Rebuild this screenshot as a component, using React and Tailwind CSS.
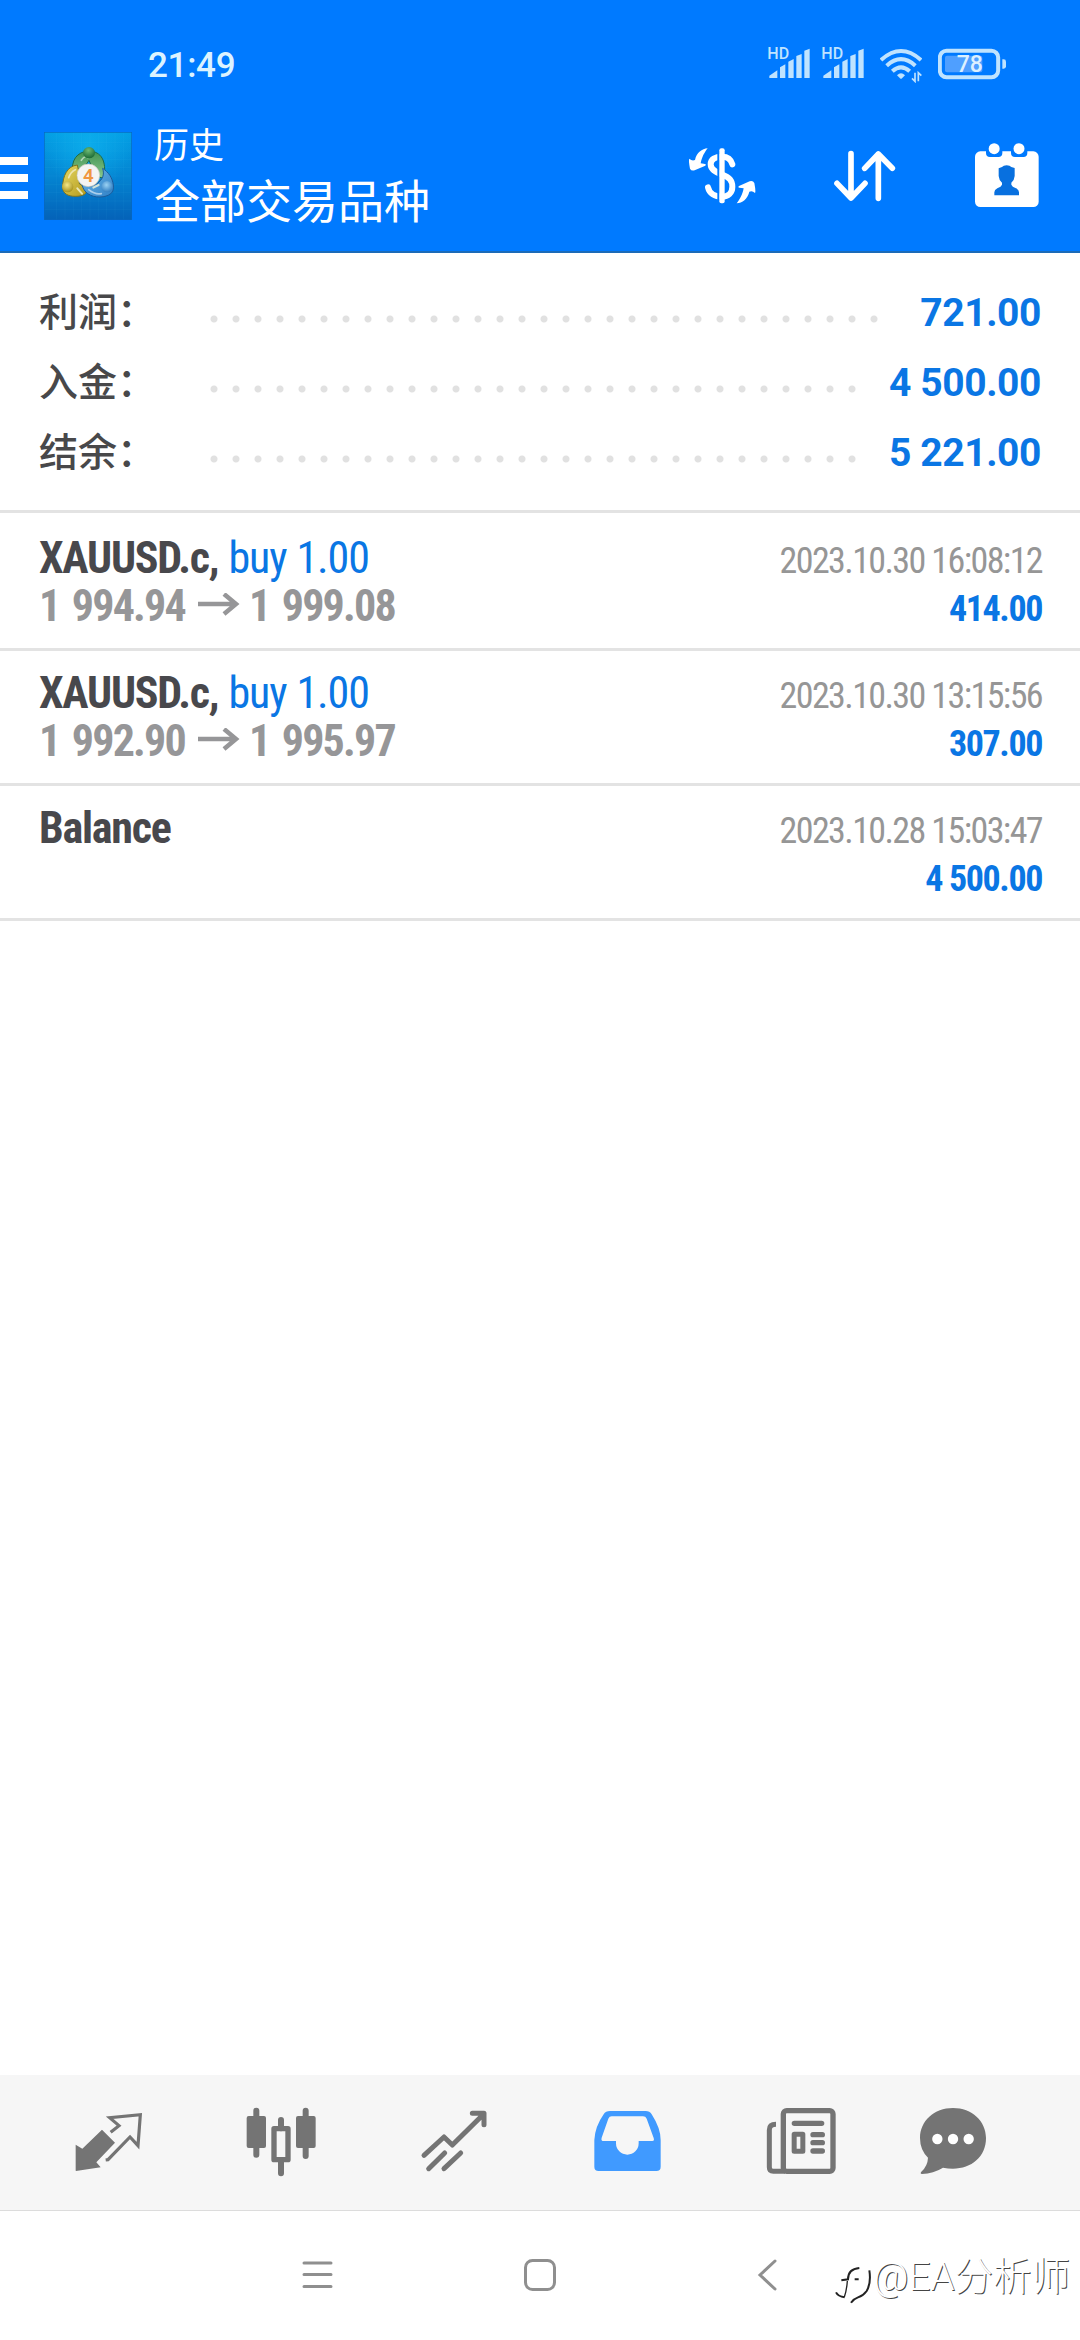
const summary = [
  { label: '利润：', value: '721.00', dots: 'w-[682px]' },
  { label: '入金：', value: '4 500.00', dots: 'w-[660px]' },
  { label: '结余：', value: '5 221.00', dots: 'w-[660px]' },
]

const deals = [
  { symbol: 'XAUUSD.c,', side: 'buy 1.00', open: '1 994.94', close: '1 999.08', time: '2023.10.30 16:08:12', profit: '414.00' },
  { symbol: 'XAUUSD.c,', side: 'buy 1.00', open: '1 992.90', close: '1 995.97', time: '2023.10.30 13:15:56', profit: '307.00' },
  { symbol: 'Balance', time: '2023.10.28 15:03:47', profit: '4 500.00' },
]

function Signal() {
  return (
    <svg width="42" height="42" viewBox="326 63 126 126" fill="#bfe3ff">
      <text x="324" y="118" fontSize="48" fontWeight="500" fontFamily="Roboto, sans-serif">HD</text>
      <path d="M330 174v-7l24-16v23zM362 174v-32l16-9v41zM387 174v-49l16-8v57zM411 174v-66l16-6v72zM435 174v-82l16-6v88z" />
    </svg>
  )
}

function Wifi() {
  return (
    <svg width="42" height="36" viewBox="660 81 126 108" fill="none" stroke="#bfe3ff" strokeWidth="12">
      <path d="M663 120Q723 66 783 120M680 137Q723 98 766 137M697 154Q723 130 749 154" />
      <path d="M711 166q12-12 24 0l-9 9q-3 3-6 0z" fill="#bfe3ff" stroke="none" />
      <path d="M765 158v26l-9-9M775 184v-26l9 9" strokeWidth="5" />
    </svg>
  )
}

function Battery() {
  return (
    <svg width="69" height="36" viewBox="834 81 207 108" fill="none">
      <rect x="839.500" y="92.500" width="175" height="79" rx="20" stroke="#bfe3ff" strokeWidth="12" />
      <rect x="855" y="107" width="112" height="50" rx="6" fill="#4f9fff" />
      <path d="M1027 118h4q7 0 7 7v14q0 7-7 7h-4z" fill="#bfe3ff" />
      <text x="890" y="157" fontSize="69" fontWeight="500" fontFamily="Roboto, sans-serif" fill="#dcf0ff">78</text>
    </svg>
  )
}

function AppLogo() {
  return (
    <svg width="88" height="88" viewBox="12 23 264 264">
      <defs>
        <linearGradient id="sky" x1="0" y1="0" x2="0" y2="1">
          <stop offset="0" stopColor="#039fe4" />
          <stop offset="0.500" stopColor="#0485d2" />
          <stop offset="1" stopColor="#0462b8" />
        </linearGradient>
        <radialGradient id="shine" cx="0.500" cy="0.150" r="0.500">
          <stop offset="0" stopColor="#0fb4f0" stopOpacity="0.700" />
          <stop offset="1" stopColor="#0fb4f0" stopOpacity="0" />
        </radialGradient>
        <linearGradient id="green" x1="0" y1="0" x2="0" y2="1">
          <stop offset="0" stopColor="#3f9250" />
          <stop offset="1" stopColor="#8ac98d" />
        </linearGradient>
        <linearGradient id="yellow" x1="0" y1="0" x2="1" y2="1">
          <stop offset="0" stopColor="#e6d965" />
          <stop offset="1" stopColor="#b39a1c" />
        </linearGradient>
        <linearGradient id="blue" x1="0" y1="0" x2="1" y2="1">
          <stop offset="0" stopColor="#6cb8ea" />
          <stop offset="1" stopColor="#2f80c6" />
        </linearGradient>
        <radialGradient id="ballG" cx="0.450" cy="0.300" r="0.700">
          <stop offset="0" stopColor="#6fbb74" />
          <stop offset="1" stopColor="#1b6a35" />
        </radialGradient>
        <radialGradient id="ballY" cx="0.450" cy="0.350" r="0.700">
          <stop offset="0" stopColor="#f3e88a" />
          <stop offset="1" stopColor="#a08a12" />
        </radialGradient>
        <radialGradient id="ballB" cx="0.450" cy="0.350" r="0.700">
          <stop offset="0" stopColor="#9ad2f4" />
          <stop offset="1" stopColor="#2877bd" />
        </radialGradient>
      </defs>
      <rect x="12" y="23" width="264" height="264" fill="url(#sky)" />
      <rect x="12" y="23" width="264" height="264" fill="url(#shine)" />
      <path d="M50 23v264M75 23v264M100 23v264M125 23v264M150 23v264M175 23v264M200 23v264M225 23v264M250 23v264M12 55h264M12 80h264M12 105h264M12 130h264M12 155h264M12 180h264M12 205h264M12 230h264M12 255h264" stroke="#6fd0ff" strokeOpacity="0.080" strokeWidth="2" />
      <rect x="13" y="24" width="262" height="262" fill="none" stroke="#0867c0" strokeWidth="2" />
      <path d="M98 150C92 108 110 82 147 80C184 82 200 108 192 162L168 156L147 108L118 150z" fill="url(#green)" stroke="#1f6b45" strokeWidth="3" />
      <path d="M112 122C82 125 68 155 68 188C68 208 84 216 106 216C128 216 144 210 138 192L118 178L118 150z" fill="url(#yellow)" stroke="#7c7420" strokeWidth="3" />
      <path d="M126 180C130 204 152 219 180 218C206 217 224 206 220 182C217 160 206 144 188 132C194 152 188 164 172 178L150 186z" fill="url(#blue)" stroke="#1b5b9a" strokeWidth="3" />
      <path d="M124 108q12-18 20-8M86 160q6-18 20-24M146 196q20 16 38 12" fill="none" stroke="#ffffff" strokeOpacity="0.550" strokeWidth="5" strokeLinecap="round" />
      <path d="M112 192l14 16M160 190l16-8" stroke="#f2f5d8" strokeOpacity="0.800" strokeWidth="6" strokeLinecap="round" />
      <ellipse cx="147" cy="85" rx="18" ry="17" fill="url(#ballG)" />
      <circle cx="83" cy="187" r="17" fill="url(#ballY)" />
      <circle cx="201" cy="187" r="17" fill="url(#ballB)" />
      <circle cx="145" cy="153" r="34" fill="#f4f4f2" stroke="#c9c9bd" strokeWidth="2" />
      <text x="145" y="173" textAnchor="middle" fontSize="56" fontWeight="600" fontFamily="Roboto, sans-serif" fill="#f0963f">4</text>
    </svg>
  )
}

function DollarIcon() {
  return (
    <svg width="68" height="64" viewBox="24 39 204 192" fill="none">
      <path d="M157 103C153 87 142 80 126 80C106 80 92 88 92 103C92 118 106 126 126 134C148 142 157 151 157 170C157 189 144 200 126 200C104 200 88 190 84 172" stroke="#fff" strokeWidth="18" strokeLinecap="round" />
      <path d="M112 60h7v155h-7z" fill="#007aff" />
      <rect x="118" y="55" width="16" height="165" rx="6" fill="#fff" />
      <path id="swap" d="M83 55C66 56 50 68 45 90Q36 94 28 86Q25 90 30 116Q34 124 44 121L76 107Q80 103 75 102L62 100C66 80 73 68 83 55z" fill="#fff" />
      <use href="#swap" transform="rotate(180 126.500 137.500)" />
    </svg>
  )
}

function SortIcon() {
  return (
    <svg width="62" height="64" viewBox="523 369 186 192" fill="none" stroke="#fff" strokeWidth="17" strokeLinecap="round" strokeLinejoin="round">
      <path d="M574 401V533M532 490L574 534L616 490M656 535V402M615 445L656 402L698 445" />
    </svg>
  )
}

function CalendarIcon() {
  return (
    <svg width="64" height="64" viewBox="945 368 192 192">
      <rect x="945" y="393" width="191" height="167" rx="16" fill="#fff" />
      <path d="M978 390h49v8q0 12-12 12h-25q-12 0-12-12zM1053 390h49v8q0 12-12 12h-25q-12 0-12-12z" fill="#007aff" />
      <circle cx="1002.500" cy="385" r="16.500" fill="#fff" />
      <circle cx="1077" cy="385" r="16.500" fill="#fff" />
      <path d="M1040 435q10 0 14 5l10 3v24q-1 13-10 20v6q2 6 14 11q9 4 9 12v9h-74v-9q0-8 9-12q12-5 14-11v-6q-9-7-10-20v-23l10-4q4-5 14-5z" fill="#0870df" />
    </svg>
  )
}

function Tab({ x, className, children }) {
  return (
    <button className={className}>
      <svg width="72" height="70" viewBox={`${x} 141 216 210`} fill="none">
        {children}
      </svg>
    </button>
  )
}

function TabBar() {
  return (
    <nav className="flex h-[136px] items-start gap-[101px] border-b border-[#dcdcdc] bg-[#f6f6f6] pt-8 pl-[72px] text-[#747474]">
      <Tab x={96}>
        <path d="M186 209L225 248L169 307L182 322L108 333Q107 333 107 331L107 254L127 266z" fill="currentColor" />
        <path d="M212 217L237 197L209 173L301 164L294 257L270 231L204 299L197 300" stroke="currentColor" strokeWidth="9.500" />
      </Tab>
      <Tab x={615}>
        <path d="M649 152V284M797 152V288M723 180V205M723 300V340" stroke="currentColor" strokeWidth="18" strokeLinecap="round" />
        <rect x="620" y="168" width="58" height="96" rx="6" fill="currentColor" />
        <rect x="768" y="168" width="59" height="96" rx="6" fill="currentColor" />
        <rect x="702" y="206" width="42" height="93" stroke="currentColor" strokeWidth="16" strokeLinejoin="round" />
      </Tab>
      <Tab x={1134}>
        <path d="M1152 286L1212 231L1237 255L1329 164M1297 160H1332V194M1166 326L1214 279M1212 326L1262 279" stroke="currentColor" strokeWidth="15" strokeLinecap="round" strokeLinejoin="round" />
      </Tab>
      <Tab x={93}>
        <path fillRule="evenodd" d="M150 153H257Q269 153 275 163Q302 205 302 240V320Q302 333 289 333H116Q103 333 103 320V240Q105 200 131 163Q137 153 150 153zM155 169Q148 169 145 176L125 233Q122 243 131 243H168V250A34 34 0 0 0 236 250V243H277Q284 243 281 234L260 176Q257 169 249 169z" fill="#409aff" />
      </Tab>
      <Tab x={612}>
        <rect x="670" y="152" width="149" height="182" rx="10" stroke="currentColor" strokeWidth="16" />
        <path d="M648 193Q628 193 628 210V322Q628 334 640 334H675" stroke="currentColor" strokeWidth="15" />
        <path d="M703 190H785M759 224H787M759 248H787M759 273H787" stroke="currentColor" strokeWidth="16" strokeLinecap="round" />
        <rect x="702.500" y="223" width="26" height="51" stroke="currentColor" strokeWidth="15" strokeLinejoin="round" />
      </Tab>
      <Tab x={1071} className="-ml-5">
        <path d="M1179 144C1236 144 1278 183 1278 234C1278 290 1234 326 1179 326Q1164 326 1149 323Q1120 341 1086 342Q1079 341 1084 335Q1103 318 1104 293Q1080 270 1080 234C1080 183 1122 144 1179 144z" fill="currentColor" />
        <path d="M1132 237h.1M1179 237h.1M1226 237h.1" stroke="#fff" strokeWidth="31" strokeLinecap="round" />
      </Tab>
    </nav>
  )
}

function Header() {
  return (
    <header className="h-[253px] border-b-2 border-[#1c6bb8] bg-[#007aff] text-white">
      <div className="flex h-[120px] items-start pt-[41px] pr-[73px] pl-[148px]">
        <span className="mt-[7px] text-[35px] leading-[36px] font-medium tracking-[-0.3px] text-[#dcf3ff]">21:49</span>
        <div className="ml-auto flex items-end">
          <Signal />
          <div className="ml-3"><Signal /></div>
          <div className="ml-4"><Wifi /></div>
          <div className="ml-4"><Battery /></div>
        </div>
      </div>
      <div className="flex items-start">
        <div className="mt-[37px] flex flex-col gap-[9px]">
          <div className="h-2 w-7 bg-white" />
          <div className="h-2 w-7 bg-white" />
          <div className="h-2 w-7 bg-white" />
        </div>
        <div className="mt-3 ml-4"><AppLogo /></div>
        <div className="mt-[2px] ml-[22px]">
          <div className="h-[50px] text-[35px] leading-[50px]">历史</div>
          <div className="h-[60px] text-[46px] leading-[60px]">全部交易品种</div>
        </div>
        <div className="mt-[23px] mr-[41px] ml-auto flex">
          <DollarIcon />
          <div className="ml-[78px]"><SortIcon /></div>
          <div className="ml-[79px]"><CalendarIcon /></div>
        </div>
      </div>
    </header>
  )
}

function Deal({ deal }) {
  return (
    <div className="h-[135px] border-b-3 border-[#e3e3e3] pt-[18px] pr-[38px] pl-[39px] text-[44px] leading-[48px] font-stretch-75%">
      <div className="flex h-12 items-baseline justify-between">
        <div>
          <span className="font-bold tracking-[-1.25px] text-[#48484c]">{deal.symbol}</span>{' '}
          <span className="tracking-[-1.1px] text-[#0a76e4] [word-spacing:1px]">{deal.side}</span>
        </div>
        <span className="text-[36px] tracking-[-1.6px] text-[#969696]">{deal.time}</span>
      </div>
      <div className="flex h-12 items-baseline justify-between">
        <div className="flex items-baseline font-bold tracking-[-1.8px] text-[#969698] [word-spacing:4px]">
          {deal.open ?? '\u00a0'}
          {deal.close && (
            <svg className="mr-[9px] ml-[12px]" width="43" height="28" viewBox="0 0 43 28" fill="none" stroke="currentColor" strokeWidth="4.500">
              <path d="M1 11H40M27 1L39 11L27 21" />
            </svg>
          )}
          {deal.close}
        </div>
        <span className="text-[36px] font-bold tracking-[-1.4px] text-[#0a76e4]">{deal.profit}</span>
      </div>
    </div>
  )
}

export default function App() {
  return (
    <div className="flex h-[2340px] w-[1080px] flex-col overflow-hidden bg-white font-[Roboto,'Noto_Sans_CJK_SC',sans-serif]">
      <Header />
      <section className="h-[260px] border-b-3 border-[#e3e3e3] pt-[25px] pr-[39px] pl-[39px]">
        {summary.map((row) => (
          <div key={row.label} className="flex h-[70px] items-baseline text-[39px] leading-[70px]">
            <span className="w-[164px] font-medium text-[#48484a]">{row.label}</span>
            <div className={`h-[22px] self-center bg-[radial-gradient(circle_at_center,#e1e1e1_3px,transparent_4px)] bg-[length:22px_22px] mt-[12px] ${row.dots}`} />
            <span className="ml-auto font-bold tracking-[-0.4px] text-[#0a76e4]">{row.value}</span>
          </div>
        ))}
      </section>
      <main className="flex-1 pt-[3px]">
        {deals.map((deal) => (
          <Deal key={deal.time} deal={deal} />
        ))}
      </main>
      <TabBar />
      <footer className="relative flex h-[129px] items-start pt-[48px] pl-[302px] text-[#8f8f8f]">
        <svg width="32" height="32" viewBox="0 0 32 32" fill="none" stroke="currentColor" strokeWidth="3" strokeLinecap="round">
          <path d="M2 4H29M2 15.500H29M2 27.500H29" />
        </svg>
        <svg className="ml-[190px]" width="32" height="32" viewBox="0 0 32 32" fill="none" stroke="currentColor" strokeWidth="3">
          <rect x="1.500" y="1.500" width="29" height="29" rx="7" />
        </svg>
        <svg className="ml-[200px]" width="22" height="32" viewBox="0 0 22 32" fill="none" stroke="currentColor" strokeWidth="3" strokeLinecap="round">
          <path d="M19 2L4 16L19 30" />
        </svg>
        <div className="absolute top-[38px] right-[10px] flex items-start text-white">
          <svg className="mt-[14px] mr-[1px]" width="38" height="42" viewBox="30 70 114 126" fill="none" stroke="#222">
            <path d="M52 122L72 119Q72 88 106 85" strokeWidth="6" />
            <path d="M70 124Q68 152 61 172" strokeWidth="4" />
            <path d="M36 158Q42 170 62 173M92 119H104" strokeWidth="6" />
            <path d="M136 92Q142 130 128 154Q118 168 102 173Q88 178 81 189" strokeWidth="6" />
          </svg>
          <span className="text-[38.5px] leading-[56px] font-light [text-shadow:1px_1px_0_#444]">@EA分析师</span>
        </div>
      </footer>
    </div>
  )
}
